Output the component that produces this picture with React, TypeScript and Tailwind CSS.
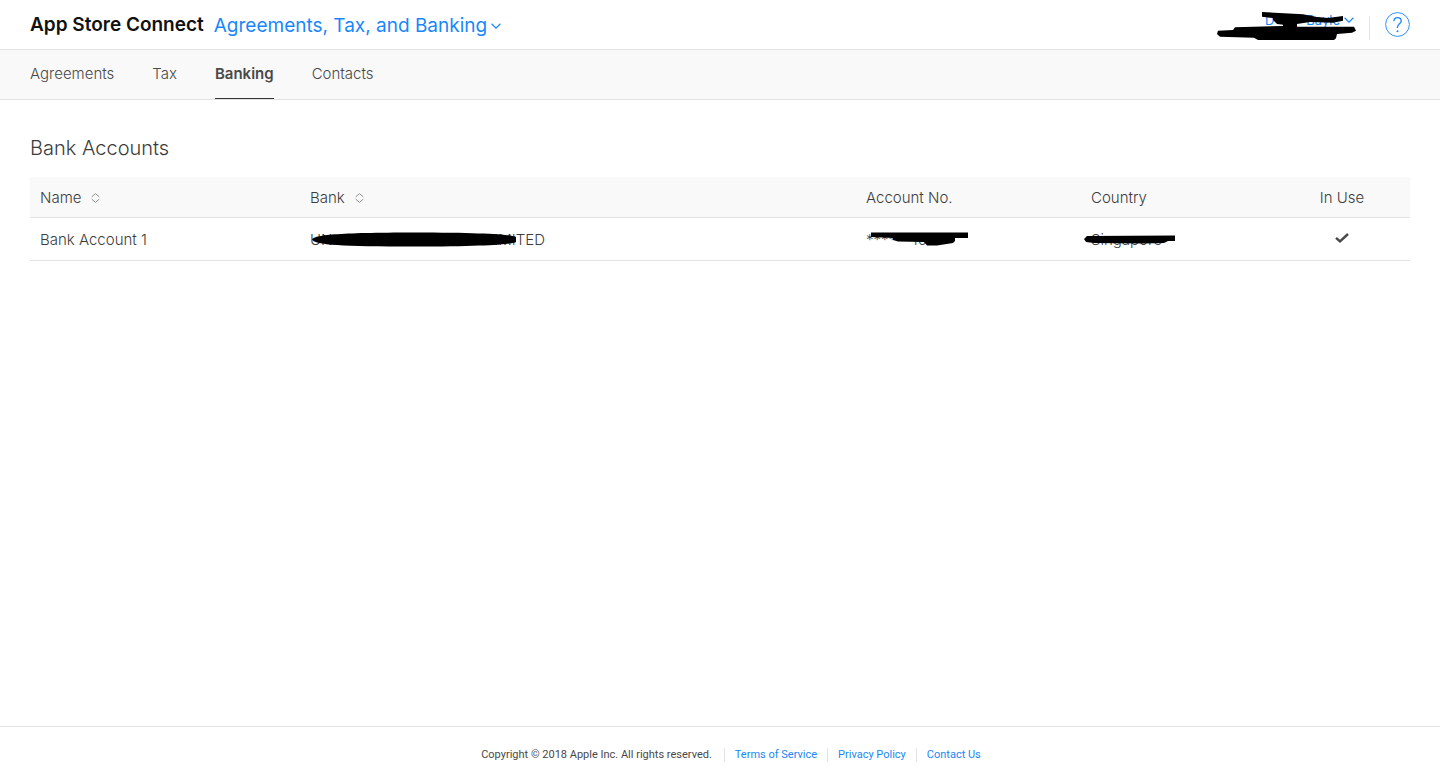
const tabs = ["Agreements", "Tax", "Banking", "Contacts"];

const footerLinks = ["Terms of Service", "Privacy Policy", "Contact Us"];

type IconProps = {
  className?: string;
};

function ChevronIcon({ className }: IconProps) {
  return (
    <svg className={className} viewBox="0 0 10 6" fill="none" stroke="currentColor" strokeWidth="1.2" aria-hidden="true">
      <path d="M0.6 0.8 5 5.1 9.4 0.8" />
    </svg>
  );
}

function SortIcon() {
  return (
    <svg className="w-[9px] h-[10px]" viewBox="0 0 9 10" fill="none" stroke="#8e8e8e" strokeWidth="1" aria-hidden="true">
      <path d="M0.7 3.9 4.5 0.6 8.3 3.9M0.7 6.1 4.5 9.4 8.3 6.1" />
    </svg>
  );
}

function CheckIcon() {
  return (
    <svg className="w-[14px] h-[10px]" viewBox="0 0 14 10" fill="none" stroke="#494949" strokeWidth="2.4" role="img" aria-label="In use">
      <path d="M1 4.8 5 8.4 13 1" />
    </svg>
  );
}

function Header() {
  return (
    <header className="flex justify-between h-[50px] px-[30px] border-b border-[#e3e3e3]">
      <div className="flex items-center gap-2.5">
        <h1 className="text-[19px] leading-6 font-semibold text-[#111]">App Store Connect</h1>
        <button type="button" className="flex items-center gap-1 pt-0.5 text-[19px] leading-6 text-[#1987fb]">
          Agreements, Tax, and Banking
          <ChevronIcon className="w-[10px] h-[6px]" />
        </button>
      </div>
      <div className="flex items-center">
        <button type="button" className="relative flex items-center gap-1 pb-2.5 mr-[15px] text-[13px] leading-4 text-[#1987fb]">
          <span className="flex justify-between w-[75px]">
            <span>D</span>
            <span>Bayle</span>
          </span>
          <ChevronIcon className="w-[10px] h-[6px]" />
          {/* marker strokes over the user name */}
          <svg className="absolute right-[-2px] top-0 w-[140px] h-[30px]" viewBox="0 0 140 30" aria-hidden="true">
            <path d="M46 0 87 2.3 101 5 112 6 127 4V8.7L117 10.7 94 10 81 12V14.7H120L138 14.7 140 18.7 136 20.7 121 22 120 26.3 118 28H42L38 25.7 4 24.7 1 22 2 18.7 17 18 19 15.3 67 14V12.7L61 12 57 8V6L46 4.7Z" />
          </svg>
        </button>
        <span className="w-px h-6 mt-1.5 mr-[15px] bg-[#e3e3e3]" />
        <button type="button" aria-label="Help" className="text-[#1987fb]">
          <svg className="w-[25px] h-[25px]" viewBox="0 0 25 25" fill="none" stroke="currentColor" aria-hidden="true">
            <circle cx="12.5" cy="12.5" r="11.9" strokeWidth="0.9" />
            <path d="M8.9 9.2C9 6.9 10.4 5.7 12.5 5.7S16.2 7 16.2 8.9C16.2 11.7 12.5 11.9 12.5 15.2V16" strokeWidth="1.3" />
            <circle cx="12.5" cy="19.3" r="1" fill="currentColor" stroke="none" />
          </svg>
        </button>
      </div>
    </header>
  );
}

function TabBar() {
  return (
    <nav className="flex gap-[38px] h-[50px] px-[30px] bg-[#f9f9f9] border-b border-[#e3e3e3]">
      {tabs.map((tab) => (
        <a
          key={tab}
          href="#"
          className={
            tab === "Banking"
              ? "flex items-center text-[15px] leading-5 font-semibold text-[#494949] border-b border-[#333]"
              : "flex items-center text-[15px] leading-5 font-light text-[#494949] border-b border-transparent"
          }
        >
          {tab}
        </a>
      ))}
    </nav>
  );
}

function BankTable() {
  return (
    <table className="w-full table-fixed text-left text-[15px] leading-5 text-[#3c3c3c]">
      <colgroup>
        <col className="w-[270px]" />
        <col />
        <col className="w-[225px]" />
        <col className="w-[193px]" />
        <col className="w-[136px]" />
      </colgroup>
      <thead>
        <tr className="h-10 bg-[#f9f9f9] border-b border-[#e3e3e3]">
          <th className="px-2.5 pt-0.5 font-light">
            <button type="button" className="flex items-center gap-2.5">
              Name
              <SortIcon />
            </button>
          </th>
          <th className="px-2.5 pt-0.5 font-light">
            <button type="button" className="flex items-center gap-2.5">
              Bank
              <SortIcon />
            </button>
          </th>
          <th className="px-2.5 pt-0.5 font-light">Account No.</th>
          <th className="px-2.5 pt-0.5 font-light">Country</th>
          <th className="px-2.5 pt-0.5 font-light text-center">In Use</th>
        </tr>
      </thead>
      <tbody>
        <tr className="h-[43px] border-b border-[#e3e3e3] font-light">
          <td className="px-2.5 pt-0.5">Bank Account 1</td>
          <td className="px-2.5 pt-0.5">
            <span className="relative flex justify-between w-[235px]">
              <span>UN</span>
              <span>LIMITED</span>
              <svg className="absolute left-[2px] top-[2px] w-[205px] h-[15px]" viewBox="0 0 205 15" aria-hidden="true">
                <path d="M0 7.5C2 3 25 .6 102 .5 175 .5 203 3 204 5V10C202 12 175 14.5 102 14.5 30 14.5 3 13 0 7.5Z" />
              </svg>
            </span>
          </td>
          <td className="px-2.5 pt-0.5">
            <span className="relative flex justify-between w-[61px]">
              <span>****</span>
              <span>10</span>
              <svg className="absolute left-[4px] top-[2px] w-[100px] h-[14px]" viewBox="0 0 100 14" aria-hidden="true">
                <path d="M1 .5H98V6H85V9L83 11 67 13.5H57L54 10 28 9.5 23 8V6L1 5Z" />
              </svg>
            </span>
          </td>
          <td className="px-2.5 pt-0.5">
            <span className="relative inline-block">
              Singapore
              <svg className="absolute left-[-7px] top-[5px] w-[92px] h-[10px]" viewBox="0 0 92 10" aria-hidden="true">
                <path d="M3 1 91 .5V6H84L80 8 60 8.5 10 8 2 7 0 4Z" />
              </svg>
            </span>
          </td>
          <td className="px-2.5 pt-0.5">
            <span className="flex justify-center pb-1">
              <CheckIcon />
            </span>
          </td>
        </tr>
      </tbody>
    </table>
  );
}

function Footer() {
  return (
    <footer className="flex justify-center items-center h-[52px] pt-1 pl-8 border-t border-[#e3e3e3] font-['Roboto','Liberation_Sans',sans-serif] text-[11px] leading-[14px] text-[#494949]">
      <p className="pr-3">Copyright © 2018 Apple Inc. All rights reserved.</p>
      {footerLinks.map((link) => (
        <a key={link} href="#" className="px-2.5 border-l border-[#e3e3e3] text-[#1987fb]">
          {link}
        </a>
      ))}
    </footer>
  );
}

export default function App() {
  return (
    <div className="flex flex-col min-h-screen bg-white font-['Inter','Liberation_Sans',sans-serif]">
      <Header />
      <TabBar />
      <main className="grow px-[30px] pt-8">
        <h2 className="mb-[13px] text-[20px] leading-8 font-light text-[#3c3c3c]">Bank Accounts</h2>
        <BankTable />
      </main>
      <Footer />
    </div>
  );
}
